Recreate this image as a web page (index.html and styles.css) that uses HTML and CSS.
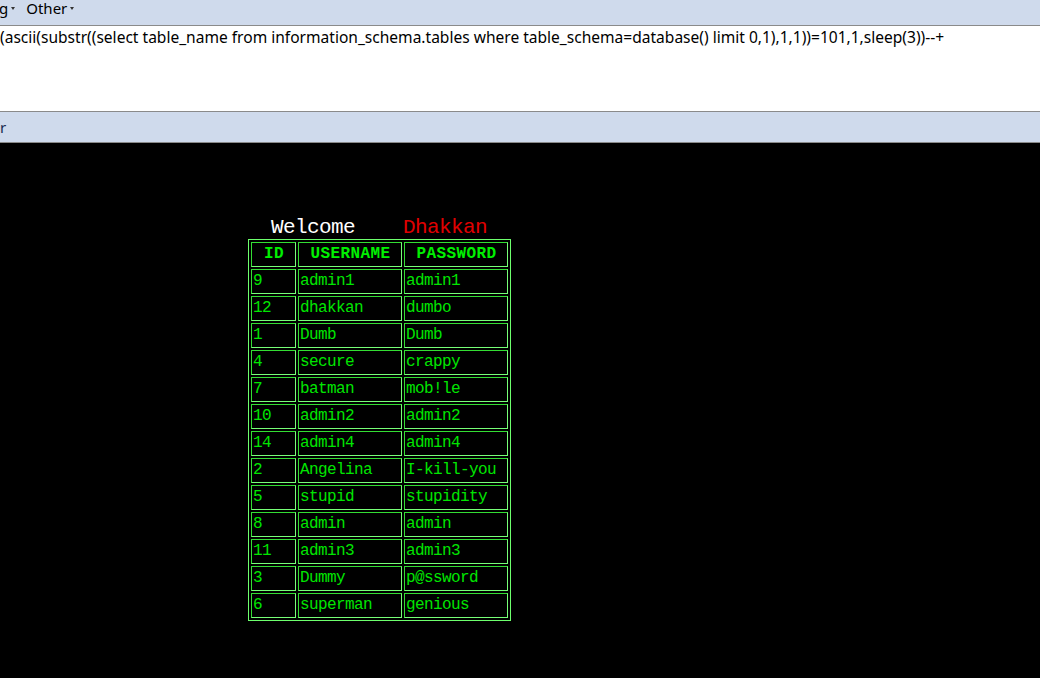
FILE: index.html
```html
<!DOCTYPE html>
<html>
<head>
<meta charset="utf-8">
<link rel="stylesheet" href="styles.css">
</head>
<body>
<div class="menubar"><span class="menu">g<span class="caret"></span></span><span class="menu">Other<span class="caret"></span></span></div>
<div class="urlbox">(ascii(substr((select table_name from information_schema.tables where table_schema=database() limit 0,1),1,1))=101,1,sleep(3))--+</div>
<div class="bar2">r</div>
<div class="content">
  <div class="welcome">Welcome&nbsp;&nbsp;&nbsp;&nbsp;<span class="red">Dhakkan</span></div>
  <table class="users">
    <tr><th class="c-id">ID</th><th class="c-name">USERNAME</th><th class="c-pass">PASSWORD</th></tr>
    <tr><td>9</td><td>admin1</td><td>admin1</td></tr>
    <tr><td>12</td><td>dhakkan</td><td>dumbo</td></tr>
    <tr><td>1</td><td>Dumb</td><td>Dumb</td></tr>
    <tr><td>4</td><td>secure</td><td>crappy</td></tr>
    <tr><td>7</td><td>batman</td><td>mob!le</td></tr>
    <tr><td>10</td><td>admin2</td><td>admin2</td></tr>
    <tr><td>14</td><td>admin4</td><td>admin4</td></tr>
    <tr><td>2</td><td>Angelina</td><td>I-kill-you</td></tr>
    <tr><td>5</td><td>stupid</td><td>stupidity</td></tr>
    <tr><td>8</td><td>admin</td><td>admin</td></tr>
    <tr><td>11</td><td>admin3</td><td>admin3</td></tr>
    <tr><td>3</td><td>Dummy</td><td>p@ssword</td></tr>
    <tr><td>6</td><td>superman</td><td>genious</td></tr>
  </table>
</div>
</body>
</html>
```
FILE: styles.css
```css
html, body {
  margin: 0;
  padding: 0;
  background: #000;
  height: 100%;
}
body {
  font-family: "Noto Sans", "Open Sans", sans-serif;
  overflow: hidden;
}
.menubar {
  height: 26px;
  background: #cfdaec;
  border-bottom: 1px solid #8a8a8a;
  box-sizing: border-box;
  display: flex;
  align-items: flex-start;
  gap: 11px;
  font-size: 15px;
  line-height: 16px;
  color: #000;
  margin-left: -1px;
}
.menu {
  display: flex;
  align-items: center;
}
.caret {
  width: 0;
  height: 0;
  border-left: 2px solid transparent;
  border-right: 2px solid transparent;
  border-top: 3px solid #333;
  margin-left: 3px;
  margin-top: 1px;
}
.urlbox {
  height: 86px;
  background: #fff;
  border-bottom: 1px solid #8a8a8a;
  font-size: 15.55px;
  line-height: 22px;
  padding-top: 0;
  box-sizing: border-box;
  color: #000;
  white-space: nowrap;
}
.bar2 {
  height: 31px;
  background: #cfdaec;
  border-bottom: 1px solid #8a8a8a;
  box-sizing: border-box;
  font-size: 15px;
  line-height: 30px;
  color: #1a2a50;
}
.content {
  background: #000;
  padding-top: 74px;
  padding-left: 248px;
}
.welcome {
  font-family: "Liberation Mono", monospace;
  font-size: 21px;
  letter-spacing: -0.6px;
  line-height: 22px;
  color: #fff;
  padding-left: 23px;
}
.red {
  color: #e00000;
}
.users {
  border-collapse: separate;
  border-spacing: 2px;
  border: 1px solid #6dff6d;
  font-family: "Liberation Mono", monospace;
  color: #00e600;
  table-layout: fixed;
  width: 261px;
}
.users th, .users td {
  padding: 0 0 0 1px;
  border: 1px solid;
  border-color: #33dd33 #77ff77 #77ff77 #33dd33;
  font-size: 16px;
  letter-spacing: -0.6px;
  line-height: 23px;
  white-space: nowrap;
  overflow: hidden;
  height: 25px;
  box-sizing: border-box;
}
.users th {
  font-weight: bold;
  text-align: center;
  letter-spacing: 0.4px;
  color: #00f000;
}
.users td {
  text-align: left;
}
.c-id { width: 45px; }
.c-name { width: 104px; }
.c-pass { width: 104px; }
```
